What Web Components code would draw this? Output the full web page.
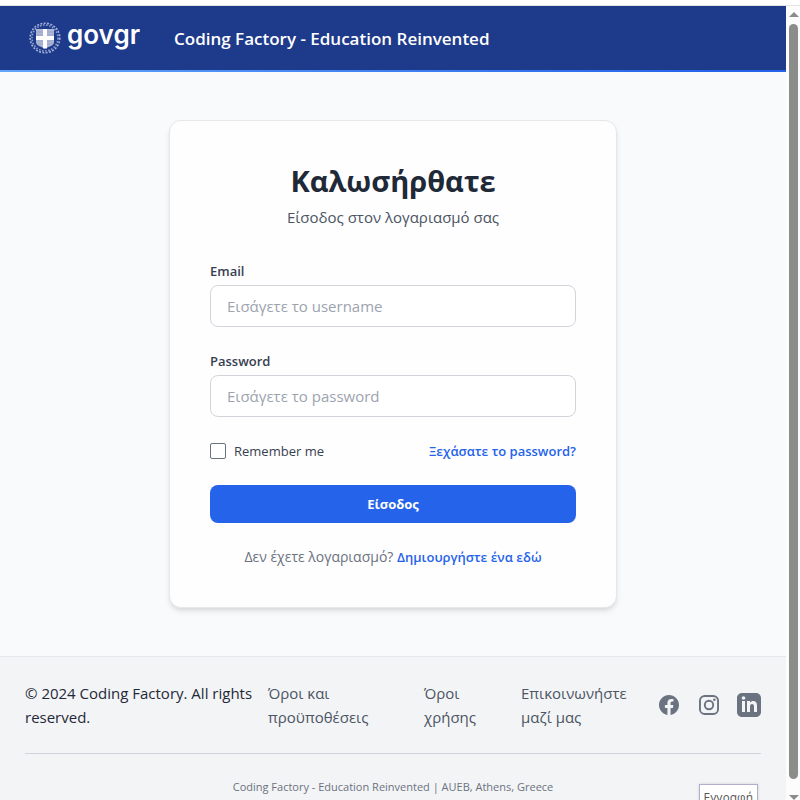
<!DOCTYPE html>
<html lang="el">
<head>
<meta charset="utf-8">
<meta name="viewport" content="width=device-width, initial-scale=1">
<title>Coding Factory - Education Reinvented</title>
<style>
  html, body { margin: 0; height: 100%; }
  body { overflow: hidden; font-family: "Open Sans", "Noto Sans", sans-serif; font-size: 15px; line-height: 24px; color: #1f2937; background: #fff; }
</style>
</head>
<body>
<page-frame>
  <site-header>Coding Factory - Education Reinvented</site-header>
  <login-card></login-card>
  <site-footer></site-footer>
  <hover-tip slot="tip">Εγγραφή</hover-tip>
</page-frame>

<script>
const define = (name, html) => customElements.define(name, class extends HTMLElement {
  constructor() {
    super();
    const t = document.createElement('template');
    t.innerHTML = '<style>*{box-sizing:border-box}:host{box-sizing:border-box}</style>' + html;
    this.attachShadow({ mode: 'open' }).append(t.content.cloneNode(true));
  }
});

define('page-scrollbar', `
<style>
  :host { display: flex; flex-direction: column; align-items: center; width: 14px; padding: 6px 0 0 1px; background: #fcfcfc; }
  svg { display: block; width: 10px; height: 5px; fill: #8b8b8b; flex: none; }
  i { flex: 1; width: 9px; margin: 7px 0 16px; border-radius: 5px; background: #8b8d8b; }
</style>
<svg viewBox="0 0 10 5"><path d="M5 0 10 5H0z"/></svg>
<i></i>
<svg viewBox="0 0 10 5"><path d="M0 0H10L5 5z"/></svg>`);

define('page-frame', `
<style>
  :host { display: flex; height: 100vh; position: relative; overflow: hidden; border-top: 5px solid #fff; }
  .view { flex: 1; display: flex; border-top: 1px solid #e2e4e4; min-width: 0; }
  main { flex: 1; min-width: 0; overflow: hidden; background: #f9fafc; }
</style>
<div class="view"><main><slot></slot></main><page-scrollbar></page-scrollbar></div>
<slot name="tip"></slot>`);

define('hover-tip', `
<style>
  :host { position: absolute; right: 42px; bottom: -12px; padding: 4px; border: 1px solid #b0b0cc; background: #fff; color: #575757; font-size: 12px; line-height: 18px; box-shadow: 0 0 3px #0002; }
</style>
<slot></slot>`);

define('gov-logo', `
<style>
  :host { display: flex; align-items: flex-start; gap: 6px; color: #fff; }
  svg { width: 32px; height: 34px; display: block; }
  span { font: 600 26px/28px Inter, sans-serif; }
</style>
<svg viewBox="0 0 32 34" fill="none">
  <circle cx="16" cy="17" r="14.800" stroke="#a3b1d8" stroke-width="1.600" stroke-dasharray="2 1.400"/>
  <circle cx="16" cy="17" r="13" stroke="#8c9bcb" stroke-width="1.700" stroke-dasharray="1.600 1.500"/>
  <path d="M7 8H25V21C25 25 20 25.500 16 27.500C12 25.500 7 25 7 21Z" fill="#aeb8d6"/>
  <path d="M7.500 11h17M7.500 14h17M7.500 20h17M8 23h16" stroke="#96a2c9"/>
  <path d="M16 8V27.500M7 17H25" stroke="#fff" stroke-width="4"/>
</svg>
<span>govgr</span>`);

define('site-header', `
<style>
  :host { display: block; background: #1e3a8a; color: #fff; }
  header { display: flex; align-items: center; gap: 34px; height: 64px; padding: 0 29px; }
  strong { font-size: 17px; font-weight: 600; line-height: 28px; padding-top: 2px; }
  .line { height: 2px; background: linear-gradient(90deg, #60a5fa, #2563eb 90%); }
</style>
<header><gov-logo></gov-logo><strong><slot></slot></strong></header>
<div class="line"></div>`);

class TextField extends HTMLElement {
  constructor() {
    super();
    this.attachShadow({ mode: 'open' }).innerHTML = `
<style>
  :host { display: block; }
  label { display: block; margin-bottom: 4px; font-size: 13px; line-height: 20px; font-weight: 600; color: #374151; }
  input { box-sizing: border-box; display: block; width: 100%; height: 42px; padding: 8px 16px; border: 1px solid #d1d5db; border-radius: 8px; background: #fff; font: inherit; color: #1f2937; }
  input::placeholder { color: #9ca3af; opacity: 1; }
  input:focus { outline: 2px solid #2563eb; outline-offset: -1px; }
</style>
<label for="field"></label><input id="field">`;
    const input = this.shadowRoot.querySelector('input');
    this.shadowRoot.querySelector('label').textContent = this.getAttribute('label');
    input.placeholder = this.getAttribute('placeholder');
    input.type = this.getAttribute('type') || 'text';
  }
}
customElements.define('text-field', TextField);

define('login-card', `
<style>
  :host { display: block; padding: 48px 16px; }
  section { max-width: 448px; margin: 0 auto; padding: 40px; border: 1px solid #e5e7eb; border-radius: 12px; background: #fefefe; box-shadow: 0 4px 6px -1px #0000001a, 0 2px 4px -2px #0000001a; }
  h1 { margin: 0; padding-top: 2px; font-size: 29px; line-height: 36px; font-weight: 700; text-align: center; }
  .sub { margin: 6px 0 32px; text-align: center; color: #4b5563; }
  form { display: flex; flex-direction: column; gap: 24px; }
  .row { display: flex; justify-content: space-between; align-items: center; font-size: 13px; line-height: 20px; }
  .row label { display: flex; align-items: center; gap: 8px; color: #374151; }
  input { appearance: none; width: 16px; height: 16px; margin: 0; border: 1px solid #6b7280; border-radius: 2px; background: #fff; }
  input:checked { background: #2563eb; }
  a { color: #2563eb; font-size: 13px; font-weight: 600; text-decoration: none; }
  button { height: 38px; border: 0; border-radius: 8px; background: #2563eb; color: #fff; font: inherit; font-size: 13px; line-height: 20px; font-weight: 700; }
  .join { margin: 0; font-size: 14px; line-height: 20px; text-align: center; color: #6b7280; }
</style>
<section>
  <h1>Καλωσήρθατε</h1>
  <p class="sub">Είσοδος στον λογαριασμό σας</p>
  <form onsubmit="return false">
    <text-field label="Email" placeholder="Εισάγετε το username"></text-field>
    <text-field label="Password" type="password" placeholder="Εισάγετε το password"></text-field>
    <div class="row"><label for="remember"><input type="checkbox" id="remember">Remember me</label><a href="#forgot">Ξεχάσατε το password?</a></div>
    <button type="submit">Είσοδος</button>
    <p class="join">Δεν έχετε λογαριασμό? <a href="#register">Δημιουργήστε ένα εδώ</a></p>
  </form>
</section>`);

define('social-links', `
<style>
  :host { display: flex; gap: 16px; }
  a { display: block; height: 24px; color: #6b7280; }
  svg { display: block; width: 24px; height: 24px; fill: currentColor; }
</style>
<a href="#facebook" aria-label="Facebook"><svg viewBox="0 0 24 24"><path d="M22 12c0-5.523-4.477-10-10-10S2 6.477 2 12c0 4.991 3.657 9.128 8.438 9.878v-6.987h-2.540V12h2.540V9.797c0-2.506 1.492-3.890 3.777-3.890 1.094 0 2.238.195 2.238.195v2.460h-1.260c-1.243 0-1.630.771-1.630 1.562V12h2.773l-.443 2.890h-2.330v6.988C18.343 21.128 22 16.991 22 12z"/></svg></a>
<a href="#instagram" aria-label="Instagram"><svg viewBox="0 0 24 24"><g fill="none" stroke="currentColor" stroke-width="1.900"><rect x="2.950" y="2.950" width="18.100" height="18.100" rx="4.800"/><circle cx="12" cy="12" r="4.200"/></g><circle cx="17.300" cy="6.700" r="1.250"/></svg></a>
<a href="#linkedin" aria-label="LinkedIn"><svg viewBox="0 0 24 24"><path fill-rule="evenodd" d="M19 0H5C2.200 0 0 2.200 0 5v14c0 2.800 2.200 5 5 5h14c2.800 0 5-2.200 5-5V5c0-2.800-2.200-5-5-5zM8 19H5V8h3v11zM6.500 6.700C5.500 6.700 4.700 5.900 4.700 5s.8-1.800 1.800-1.800S8.300 4 8.300 5 7.500 6.700 6.500 6.700zM20 19h-3v-5.600c0-3.400-4-3.100-4 0V19h-3V8h3v1.800c1.400-2.600 7-2.800 7 2.400V19z"/></svg></a>`);

define('site-footer', `
<style>
  :host { display: block; padding: 24px 25px; border-top: 1px solid #e5e7eb; background: #f3f4f6; }
  .top { display: grid; grid-template-columns: 243fr 156fr 97fr 136fr auto; align-items: center; padding-bottom: 24px; border-bottom: 1px solid #d1d5db; }
  nav { display: contents; }
  nav a { padding-right: 24px; color: #4b5563; text-decoration: none; }
  .copy { padding-right: 4px; }
  .base { margin: 0; padding-top: 24px; text-align: center; font-size: 11px; line-height: 18px; color: #6b7280; }
</style>
<footer>
  <div class="top">
    <span class="copy">© 2024 Coding Factory. All rights reserved.</span>
    <nav><a href="#terms">Όροι και προϋποθέσεις</a><a href="#use">Όροι χρήσης</a><a href="#contact">Επικοινωνήστε μαζί μας</a></nav>
    <social-links></social-links>
  </div>
  <p class="base">Coding Factory - Education Reinvented | AUEB, Athens, Greece</p>
</footer>`);
</script>
</body>
</html>
